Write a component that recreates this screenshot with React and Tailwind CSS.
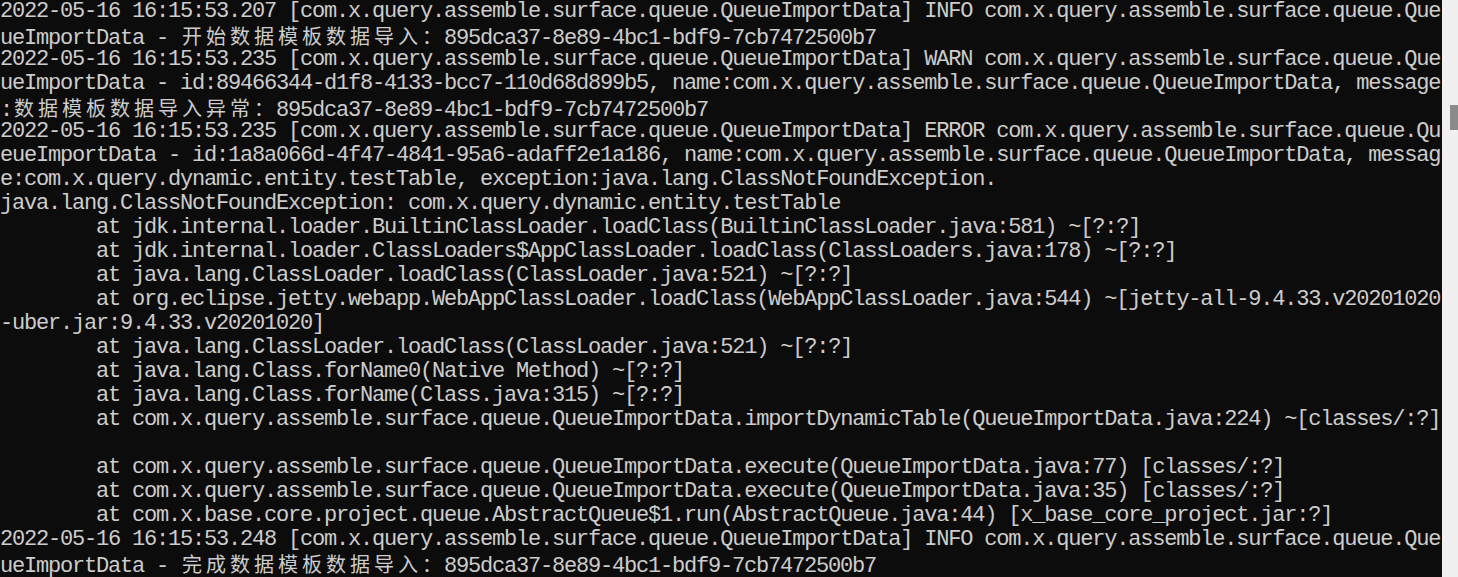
const lines = [
  '2022-05-16 16:15:53.207 [com.x.query.assemble.surface.queue.QueueImportData] INFO com.x.query.assemble.surface.queue.Que',
  'ueImportData - 开始数据模板数据导入：895dca37-8e89-4bc1-bdf9-7cb7472500b7',
  '2022-05-16 16:15:53.235 [com.x.query.assemble.surface.queue.QueueImportData] WARN com.x.query.assemble.surface.queue.Que',
  'ueImportData - id:89466344-d1f8-4133-bcc7-110d68d899b5, name:com.x.query.assemble.surface.queue.QueueImportData, message',
  ':数据模板数据导入异常：895dca37-8e89-4bc1-bdf9-7cb7472500b7',
  '2022-05-16 16:15:53.235 [com.x.query.assemble.surface.queue.QueueImportData] ERROR com.x.query.assemble.surface.queue.Qu',
  'eueImportData - id:1a8a066d-4f47-4841-95a6-adaff2e1a186, name:com.x.query.assemble.surface.queue.QueueImportData, messag',
  'e:com.x.query.dynamic.entity.testTable, exception:java.lang.ClassNotFoundException.',
  'java.lang.ClassNotFoundException: com.x.query.dynamic.entity.testTable',
  '        at jdk.internal.loader.BuiltinClassLoader.loadClass(BuiltinClassLoader.java:581) ~[?:?]',
  '        at jdk.internal.loader.ClassLoaders$AppClassLoader.loadClass(ClassLoaders.java:178) ~[?:?]',
  '        at java.lang.ClassLoader.loadClass(ClassLoader.java:521) ~[?:?]',
  '        at org.eclipse.jetty.webapp.WebAppClassLoader.loadClass(WebAppClassLoader.java:544) ~[jetty-all-9.4.33.v20201020',
  '-uber.jar:9.4.33.v20201020]',
  '        at java.lang.ClassLoader.loadClass(ClassLoader.java:521) ~[?:?]',
  '        at java.lang.Class.forName0(Native Method) ~[?:?]',
  '        at java.lang.Class.forName(Class.java:315) ~[?:?]',
  '        at com.x.query.assemble.surface.queue.QueueImportData.importDynamicTable(QueueImportData.java:224) ~[classes/:?]',
  '',
  '        at com.x.query.assemble.surface.queue.QueueImportData.execute(QueueImportData.java:77) [classes/:?]',
  '        at com.x.query.assemble.surface.queue.QueueImportData.execute(QueueImportData.java:35) [classes/:?]',
  '        at com.x.base.core.project.queue.AbstractQueue$1.run(AbstractQueue.java:44) [x_base_core_project.jar:?]',
  '2022-05-16 16:15:53.248 [com.x.query.assemble.surface.queue.QueueImportData] INFO com.x.query.assemble.surface.queue.Que',
  'ueImportData - 完成数据模板数据导入：895dca37-8e89-4bc1-bdf9-7cb7472500b7',
];

// full-width chars take two console cells
const isWide = (ch) => /[\u3000-\u9fff\uff00-\uffef]/.test(ch);

function Line({ text }) {
  const parts = [];
  let buf = '';
  [...text].forEach((ch, i) => {
    if (isWide(ch)) {
      if (buf) parts.push(buf);
      buf = '';
      parts.push({ wide: ch, key: i });
    } else {
      buf += ch;
    }
  });
  if (buf) parts.push(buf);

  return (
    <div className="h-[24px] leading-[24px] whitespace-pre">
      {parts.map((p, i) =>
        typeof p === 'string' ? (
          <span key={i}>{p}</span>
        ) : (
          <span
            key={i}
            className="inline-block w-[24px] text-center tracking-normal text-[20px] font-['Noto_Sans_CJK_SC',sans-serif]"
          >
            {p.wide}
          </span>
        )
      )}
    </div>
  );
}

export default function App() {
  return (
    <div className="w-[1458px] h-[577px] flex bg-[#f0f0f0] overflow-hidden">
      <div className="w-[1442px] h-full bg-[#0c0c0c] text-[#cccccc] text-[22px] tracking-[-1.2px] font-['Liberation_Mono',monospace] overflow-hidden">
        {lines.map((l, i) => (
          <Line key={i} text={l} />
        ))}
      </div>
      <div className="w-[16px] h-full pt-[105px] pl-[8px]">
        <div className="h-[25px] w-full bg-[#8b8b8b]" />
      </div>
    </div>
  );
}
